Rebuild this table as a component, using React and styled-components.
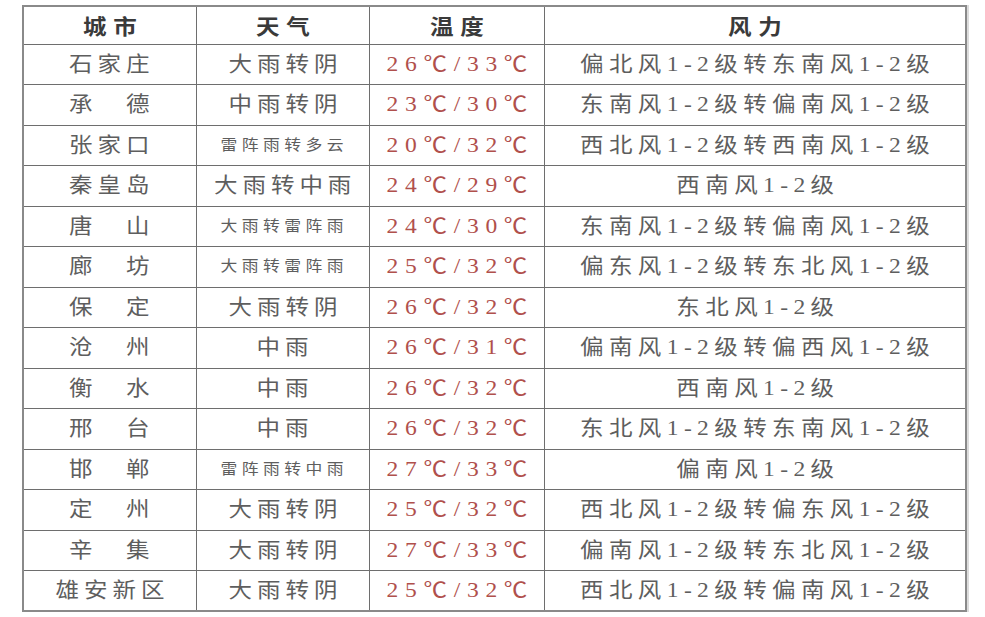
import React from "react";
import styled, { createGlobalStyle } from "styled-components";

const Global = createGlobalStyle`
  html, body { margin: 0; padding: 0; background: #ffffff; }
  body { width: 985px; height: 617px; overflow: hidden; }
`;

const Page = styled.div`
  padding: 5px 0 0 22px;
  width: 985px;
  height: 617px;
  box-sizing: border-box;
`;

const Table = styled.table`
  border-collapse: collapse;
  table-layout: fixed;
  width: 943px;
  border: 2px solid #8a8a8a;
  box-shadow: 2px 0 0 #dcdcdc;
  font-family: "Liberation Serif", "Noto Sans CJK SC", serif;
`;

const HeadRow = styled.tr`
  height: 38px;
`;

const Row = styled.tr`
  height: 40.5px;
`;

const Head = styled.th`
  border: 1px solid #6e6e6e;
  padding: 0;
  font-size: 21px;
  font-weight: 700;
  color: #3a3a3a;
  text-align: center;
  vertical-align: middle;
`;

const Cell = styled.td`
  border: 1px solid #6e6e6e;
  padding: 0;
  font-size: ${(p) => (p.$small ? 15 : 21)}px;
  color: ${(p) => (p.$temp ? "#b0504c" : "#5e5e5e")};
  text-align: center;
  vertical-align: middle;
  white-space: nowrap;
  line-height: 1;
`;

const Text = styled.span`
  display: inline-block;
  letter-spacing: ${(p) => p.$ls}px;
  padding-left: ${(p) => p.$ls}px;
  transform: scaleX(1.12);
  transform-origin: center;
`;

const rows = [
  ["石家庄", "大雨转阴", false, "26℃/33℃", "偏北风1-2级转东南风1-2级"],
  ["承　德", "中雨转阴", false, "23℃/30℃", "东南风1-2级转偏南风1-2级"],
  ["张家口", "雷阵雨转多云", true, "20℃/32℃", "西北风1-2级转西南风1-2级"],
  ["秦皇岛", "大雨转中雨", false, "24℃/29℃", "西南风1-2级"],
  ["唐　山", "大雨转雷阵雨", true, "24℃/30℃", "东南风1-2级转偏南风1-2级"],
  ["廊　坊", "大雨转雷阵雨", true, "25℃/32℃", "偏东风1-2级转东北风1-2级"],
  ["保　定", "大雨转阴", false, "26℃/32℃", "东北风1-2级"],
  ["沧　州", "中雨", false, "26℃/31℃", "偏南风1-2级转偏西风1-2级"],
  ["衡　水", "中雨", false, "26℃/32℃", "西南风1-2级"],
  ["邢　台", "中雨", false, "26℃/32℃", "东北风1-2级转东南风1-2级"],
  ["邯　郸", "雷阵雨转中雨", true, "27℃/33℃", "偏南风1-2级"],
  ["定　州", "大雨转阴", false, "25℃/32℃", "西北风1-2级转偏东风1-2级"],
  ["辛　集", "大雨转阴", false, "27℃/33℃", "偏南风1-2级转东北风1-2级"],
  ["雄安新区", "大雨转阴", false, "25℃/32℃", "西北风1-2级转偏南风1-2级"],
];

const headers = ["城市", "天气", "温度", "风力"];

export default function App() {
  return (
    <Page>
      <Global />
      <Table>
        <colgroup>
          <col style={{ width: 173 }} />
          <col style={{ width: 173 }} />
          <col style={{ width: 175 }} />
          <col style={{ width: 422 }} />
        </colgroup>
        <thead>
          <HeadRow>
            {headers.map((h) => (
              <Head key={h}>
                <Text $ls={6}>{h}</Text>
              </Head>
            ))}
          </HeadRow>
        </thead>
        <tbody>
          {rows.map(([city, weather, small, temp, wind]) => (
            <Row key={city}>
              <Cell>
                <Text $ls={4.4}>{city}</Text>
              </Cell>
              <Cell $small={small}>
                <Text $ls={small ? 4 : 4.4}>{weather}</Text>
              </Cell>
              <Cell $temp>
                <Text $ls={6}>{temp}</Text>
              </Cell>
              <Cell>
                <Text $ls={4.8}>{wind}</Text>
              </Cell>
            </Row>
          ))}
        </tbody>
      </Table>
    </Page>
  );
}
